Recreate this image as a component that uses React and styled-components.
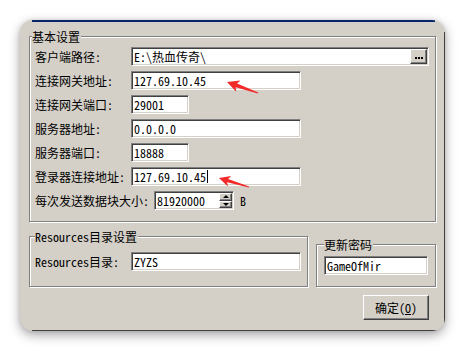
import React from 'react';
import styled, { createGlobalStyle } from 'styled-components';

const Global = createGlobalStyle`
  html, body { margin: 0; padding: 0; background: #fff; }
  #root { width: 467px; height: 351px; }
`;

const FONT = `"Noto Sans Mono CJK SC", "Noto Sans CJK SC", "Liberation Mono", monospace`;

const Page = styled.div`
  position: relative;
  width: 467px;
  height: 351px;
  box-sizing: border-box;
  padding: 20px 0 0 20px;
  font-family: ${FONT};
  font-size: 12px;
  color: #000;
  overflow: hidden;
`;

const Dialog = styled.div`
  position: relative;
  width: 425px;
  height: 311px;
  box-sizing: border-box;
  padding: 10px 9px 0 9px;
  background: #d4d0c8;
  border-radius: 13px;
  box-shadow: 0 4px 12px rgba(0, 0, 0, 0.35), 0 0 4px rgba(0, 0, 0, 0.12);
  overflow: hidden;
  display: flex;
  flex-direction: column;
  &::before {
    content: '';
    position: absolute;
    top: 0;
    left: 12px;
    right: 10px;
    height: 2px;
    background: #0a246a;
  }
  &::after {
    content: '';
    position: absolute;
    top: 12px;
    left: 12px;
    right: 0;
    bottom: 0;
    border-right: 1px solid #404040;
    border-bottom: 1px solid #404040;
    pointer-events: none;
  }
`;

const Group = styled.fieldset`
  margin: 0;
  padding: 0;
  min-width: 0;
  box-sizing: border-box;
  width: ${(p) => p.$w}px;
  flex: none;
  border: 1px solid #808080;
  box-shadow: 1px 1px 0 #fff, inset 1px 1px 0 #fff;
`;

const Legend = styled.legend`
  margin-left: ${(p) => p.$x}px;
  padding: 0 1px 0 0;
  height: 13px;
  line-height: 13px;
  font-size: 12px;
  background: #d4d0c8;
  white-space: nowrap;
`;

const GroupBody = styled.div`
  display: flex;
  flex-direction: column;
  gap: 5px;
  padding: ${(p) => p.$pad};
`;

const Row = styled.div`
  display: flex;
  align-items: center;
  height: 19px;
`;

const Label = styled.span`
  flex: none;
  width: ${(p) => (p.$w ? `${p.$w}px` : 'auto')};
  white-space: nowrap;
  line-height: 19px;
`;

const Edit = styled.div`
  box-sizing: border-box;
  flex: none;
  width: ${(p) => p.$w}px;
  height: 19px;
  padding: 1px;
  background: #fff;
  border: 1px solid;
  border-color: #808080 #fff #fff #808080;
  box-shadow: inset 1px 1px 0 #404040, inset -1px -1px 0 #d4d0c8;
  display: flex;
  align-items: center;
  white-space: nowrap;
  overflow: hidden;
  line-height: 15px;
`;

const EditText = styled.span`
  padding-left: 1px;
`;

const Caret = styled.span`
  display: inline-block;
  width: 1px;
  height: 13px;
  margin-left: 1px;
  background: #000;
`;

const Raised = styled.div`
  box-sizing: border-box;
  background: #d4d0c8;
  border: 1px solid;
  border-color: #fff #404040 #404040 #fff;
  box-shadow: inset -1px -1px 0 #808080;
  display: flex;
  align-items: center;
  justify-content: center;
`;

const DotsButton = styled(Raised)`
  margin-left: auto;
  width: 17px;
  height: 15px;
  gap: 1px;
  padding-top: 2px;
`;

const Dot = styled.span`
  width: 2px;
  height: 2px;
  background: #000;
`;

const Spin = styled.div`
  margin-left: auto;
  width: 13px;
  height: 15px;
  display: flex;
  flex-direction: column;
`;

const SpinButton = styled(Raised)`
  flex: 1;
`;

const Tri = styled.span`
  width: 0;
  height: 0;
  border-left: 3px solid transparent;
  border-right: 3px solid transparent;
  ${(p) => (p.$up ? 'border-bottom: 3px solid #000;' : 'border-top: 3px solid #000;')}
`;

const Unit = styled.span`
  margin-left: 6px;
`;

const BottomRow = styled.div`
  display: flex;
  align-items: flex-end;
  gap: 8px;
  margin-top: 8px;
`;

const Button = styled(Raised)`
  align-self: flex-end;
  margin: 8px 7px 0 0;
  width: 66px;
  height: 25px;
  font-size: 12px;
  line-height: 14px;
`;

const Arrows = styled.svg`
  position: absolute;
  top: 0;
  left: 0;
  pointer-events: none;
`;

const rows = [
  { label: '客户端路径:', w: 298, text: 'E:\\热血传奇\\', dots: true },
  { label: '连接网关地址:', w: 170, text: '127.69.10.45' },
  { label: '连接网关端口:', w: 58, text: '29001' },
  { label: '服务器地址:', w: 170, text: '0.0.0.0' },
  { label: '服务器端口:', w: 58, text: '18888' },
  { label: '登录器连接地址:', w: 170, text: '127.69.10.45', caret: true },
];

export default function App() {
  return (
    <>
      <Global />
      <Page>
        <Dialog>
          <Group $w={407}>
            <Legend $x={2}>基本设置</Legend>
            <GroupBody $pad="4px 0 11px 5px">
              {rows.map((r) => (
                <Row key={r.label}>
                  <Label $w={96}>{r.label}</Label>
                  <Edit $w={r.w}>
                    <EditText>{r.text}</EditText>
                    {r.caret && <Caret />}
                    {r.dots && (
                      <DotsButton>
                        <Dot />
                        <Dot />
                        <Dot />
                      </DotsButton>
                    )}
                  </Edit>
                </Row>
              ))}
              <Row>
                <Label $w={119}>每次发送数据块大小:</Label>
                <Edit $w={80}>
                  <EditText>81920000</EditText>
                  <Spin>
                    <SpinButton>
                      <Tri $up />
                    </SpinButton>
                    <SpinButton>
                      <Tri />
                    </SpinButton>
                  </Spin>
                </Edit>
                <Unit>B</Unit>
              </Row>
            </GroupBody>
          </Group>
          <BottomRow>
            <Group $w={279}>
              <Legend $x={5}>Resources目录设置</Legend>
              <GroupBody $pad="9px 0 15px 5px">
                <Row>
                  <Label $w={96}>Resources目录:</Label>
                  <Edit $w={170}>
                    <EditText>ZYZS</EditText>
                  </Edit>
                </Row>
              </GroupBody>
            </Group>
            <Group $w={120}>
              <Legend $x={7}>更新密码</Legend>
              <GroupBody $pad="5px 7px 11px 7px">
                <Row>
                  <Edit $w={104}>
                    <EditText>GameOfMir</EditText>
                  </Edit>
                </Row>
              </GroupBody>
            </Group>
          </BottomRow>
          <Button>
            确定(<u>O</u>)
          </Button>
        </Dialog>
        <Arrows width="467" height="351" viewBox="0 0 467 351">
          <polygon
            fill="#f22a2a"
            points="227,82 240.4,80.5 237.1,83.5 258.2,92.5 257.8,93.5 235.7,87.3 236.2,91.7"
          />
          <polygon
            fill="#f22a2a"
            points="219,178 231.1,175.9 228.1,178.9 249.1,186.5 248.9,187.5 227.1,182.3 227.9,186.5"
          />
        </Arrows>
      </Page>
    </>
  );
}
